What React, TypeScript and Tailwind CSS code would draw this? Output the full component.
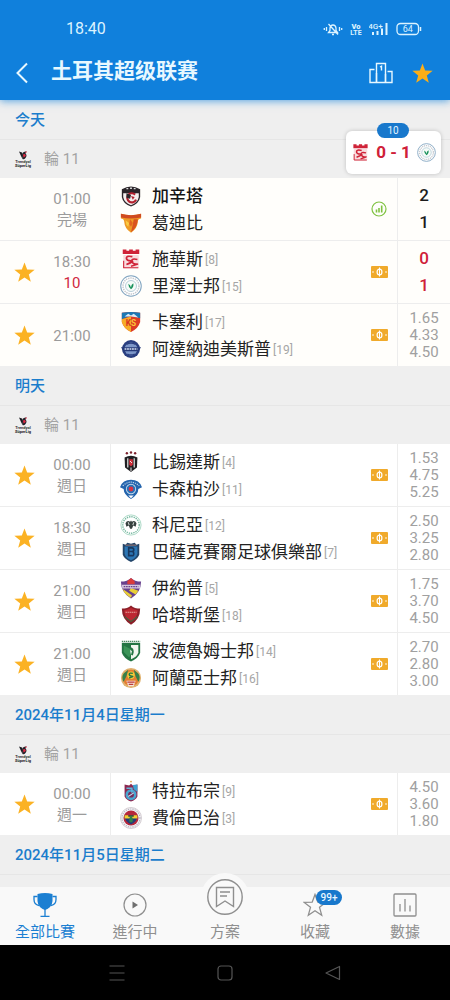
import React from "react";

type Mark = "stats" | "field";

interface Team {
  name: string;
  rank?: number;
  crest: string;
  bold?: boolean;
}

interface Match {
  time: string;
  note?: string;
  live?: boolean;
  starred: boolean;
  home: Team;
  away: Team;
  mark: Mark;
  score?: [string, string];
  odds?: [string, string, string];
}

interface Day {
  title: string;
  tint: string;
  matches: Match[];
}

const days: Day[] = [
  {
    title: "今天",
    tint: "bg-[#fffefb]",
    matches: [
      {
        time: "01:00",
        note: "完場",
        starred: false,
        home: { name: "加辛塔", crest: "gaziantep", bold: true },
        away: { name: "葛迪比", crest: "goztepe" },
        mark: "stats",
        score: ["2", "1"],
      },
      {
        time: "18:30",
        note: "10",
        live: true,
        starred: true,
        home: { name: "施華斯", rank: 8, crest: "sivas" },
        away: { name: "里澤士邦", rank: 15, crest: "rize" },
        mark: "field",
        score: ["0", "1"],
      },
      {
        time: "21:00",
        starred: true,
        home: { name: "卡塞利", rank: 17, crest: "kayseri" },
        away: { name: "阿達納迪美斯普", rank: 19, crest: "adana" },
        mark: "field",
        odds: ["1.65", "4.33", "4.50"],
      },
    ],
  },
  {
    title: "明天",
    tint: "bg-white",
    matches: [
      {
        time: "00:00",
        note: "週日",
        starred: true,
        home: { name: "比錫達斯", rank: 4, crest: "besiktas" },
        away: { name: "卡森柏沙", rank: 11, crest: "kasimpasa" },
        mark: "field",
        odds: ["1.53", "4.75", "5.25"],
      },
      {
        time: "18:30",
        note: "週日",
        starred: true,
        home: { name: "科尼亞", rank: 12, crest: "konya" },
        away: { name: "巴薩克賽爾足球俱樂部", rank: 7, crest: "basaksehir" },
        mark: "field",
        odds: ["2.50", "3.25", "2.80"],
      },
      {
        time: "21:00",
        note: "週日",
        starred: true,
        home: { name: "伊約普", rank: 5, crest: "eyup" },
        away: { name: "哈塔斯堡", rank: 18, crest: "hatay" },
        mark: "field",
        odds: ["1.75", "3.70", "4.50"],
      },
      {
        time: "21:00",
        note: "週日",
        starred: true,
        home: { name: "波德魯姆士邦", rank: 14, crest: "bodrum" },
        away: { name: "阿蘭亞士邦", rank: 16, crest: "alanya" },
        mark: "field",
        odds: ["2.70", "2.80", "3.00"],
      },
    ],
  },
  {
    title: "2024年11月4日星期一",
    tint: "bg-white",
    matches: [
      {
        time: "00:00",
        note: "週一",
        starred: true,
        home: { name: "特拉布宗", rank: 9, crest: "trabzon" },
        away: { name: "費倫巴治", rank: 3, crest: "fener" },
        mark: "field",
        odds: ["4.50", "3.60", "1.80"],
      },
    ],
  },
  { title: "2024年11月5日星期二", tint: "bg-white", matches: [] },
];

const crests: Record<string, React.ReactNode> = {
  gaziantep: (
    <>
      <path d="M2 4.500Q12-1 22 4.500V13Q21 20 12 23.500Q3 20 2 13Z" fill="#2b2529" />
      <path d="M3.500 9H20.500V13Q19.500 19 12 22Q4.500 19 3.500 13Z" fill="#f4efee" />
      <path d="M7 4h2M11 3.500h2M15 4h2" stroke="#ddd" strokeWidth="1.500" />
      <path d="M16.500 10.500A5 5 0 1 0 17.500 16" fill="none" stroke="#b3202e" strokeWidth="2.400" />
      <path d="M7 9l5 2-1 4-4-1Z" fill="#2b2529" />
      <path d="M12 12l4 1-2 3Z" fill="#b3202e" />
    </>
  ),
  goztepe: (
    <>
      <path d="M1 2Q12 5 23 2V7Q20 7 19.500 10Q19 18 12 22.500Q5 18 4.500 10Q4 7 1 7Z" fill="#ee9a25" />
      <path d="M1 2Q12 5 23 2V6Q12 8 1 6Z" fill="#cf4a21" />
      <path d="M15 8H19.500Q19 17 12 22Q14 14 15 8Z" fill="#d9531f" />
      <path d="M6 9l4 3-1 4-2-2Z" fill="#f9cb45" />
      <path d="M11 8l3 4-2 4-2-3Z" fill="#e2641f" />
    </>
  ),
  sivas: (
    <>
      <path d="M3 1.500h4v1.500h3V1.500h4v1.500h3V1.500h4v5H3Z" fill="#cf2338" />
      <rect x="3.500" y="7.500" width="17" height="14.500" rx="1" fill="#f8dcde" />
      <path d="M13.500 9.500Q7 8 7 11T12 14T7 18" fill="none" stroke="#cf2338" strokeWidth="1.900" />
      <path d="M19 12.500Q12 11 13 14.500T18 17.500T12 20" fill="none" stroke="#cf2338" strokeWidth="1.700" />
      <path d="M4 14v7.500h16" fill="none" stroke="#cf2338" strokeWidth="1.200" />
    </>
  ),
  rize: (
    <>
      <circle cx="12" cy="12" r="11.200" fill="#fff" stroke="#7fa3bf" strokeWidth="1.100" />
      <circle cx="12" cy="12" r="8.700" fill="none" stroke="#c2c6cc" strokeWidth="1.600" strokeDasharray="1.500 1" />
      <circle cx="12" cy="12" r="6" fill="#f6fbf8" stroke="#9dbccb" strokeWidth=".8" />
      <path d="M12 15.500Q9 13 9 9.500Q11.500 10.500 12 13.500Q12 10.500 14.500 9Q15.500 13 12 15.500Z" fill="#18915a" />
    </>
  ),
  kayseri: (
    <>
      <path d="M2 2Q12 0 22 2V12Q20 19 12 23Q4 19 2 12Z" fill="#dd3c26" />
      <path d="M2 2Q12 0 22 2V8L12 5L2 9Z" fill="#1c78b4" />
      <path d="M5 6l4-3 3 2 3-2 5 4-8-1Z" fill="#dcebf4" />
      <path d="M2 9L12 6V23Q4 19 2 12Z" fill="#f6ac27" />
      <text x="12" y="16" textAnchor="middle" fontSize="9" fontWeight="700" fill="#d63322">
        K<tspan fill="#fbc63a">S</tspan>
      </text>
    </>
  ),
  adana: (
    <>
      <circle cx="12" cy="12" r="9.800" fill="#293e7f" />
      <circle cx="12" cy="12" r="7" fill="#7d97c8" />
      <path d="M1 10h22l-3 4.500H4Z" fill="#263a78" />
      <path d="M5 12h14" stroke="#d8e2f2" strokeWidth="1.600" strokeDasharray="2 .7" />
      <path d="M7 7q5-3 10 0M8 17.500q4 2 8 0" fill="none" stroke="#293e7f" strokeWidth="1.300" />
    </>
  ),
  besiktas: (
    <>
      <circle cx="7.500" cy="2.500" r="1.300" fill="#7d222d" />
      <circle cx="12" cy="1.700" r="1.300" fill="#7d222d" />
      <circle cx="16.500" cy="2.500" r="1.300" fill="#7d222d" />
      <path d="M5 7Q12 3.500 19 7L18.500 18L12 23L5.500 18Z" fill="#201f22" />
      <path d="M8.500 8v10M15.500 8v10" stroke="#e6e6e6" strokeWidth="1.300" />
      <path d="M10 9h4v6l-2 2-2-2Z" fill="#cf2d39" />
      <path d="M11 11l2 2" stroke="#fff" strokeWidth="1" />
      <path d="M12 18v4" stroke="#ddd" strokeWidth="1.200" />
    </>
  ),
  kasimpasa: (
    <>
      <path d="M0 10Q3 2 12 2T24 10L20 12Q20 18 12 23Q4 18 4 12Z" fill="#2464ad" />
      <path d="M3 8.500Q12 .5 21 8.500" fill="none" stroke="#b9d0e8" strokeWidth="1.300" strokeDasharray="1.400 1" />
      <circle cx="12" cy="12" r="5.600" fill="#c4d8ea" />
      <circle cx="12" cy="12" r="4.600" fill="#2871b8" />
      <circle cx="12" cy="12" r="2.600" fill="#d93143" />
      <path d="M9 19l3 3 3-3" fill="#fff" />
    </>
  ),
  konya: (
    <>
      <circle cx="12" cy="12" r="11" fill="#fff" stroke="#a6d6c3" strokeWidth="1" />
      <circle cx="12" cy="12" r="9" fill="none" stroke="#74b79e" strokeWidth="1.500" strokeDasharray="1.500 1" />
      <path d="M6 10Q8 6 11 8.500L12 7L13 8.500Q16 6 18 10L17 14L14.500 12.500L13 16H11L9.500 12.500L7 14Z" fill="#37413f" />
      <path d="M9 9l1 3M15 9l-1 3" stroke="#e6eeea" strokeWidth="1" />
    </>
  ),
  basaksehir: (
    <>
      <path d="M3 3l3 1 2-2 4 1 4-1 2 2 3-1V15Q19 20 12 23Q5 20 3 15Z" fill="#234569" />
      <path d="M5 6H19V14Q18 18.500 12 21Q6 18.500 5 14Z" fill="#2c76b4" />
      <path d="M9.500 7.500h3.500q2 0 2 2t-2 2q2 0 2 2.500t-2 2h-3.500ZM9.500 11.500H13" fill="none" stroke="#17375e" strokeWidth="1.800" />
      <path d="M6 4.500h12" stroke="#c78b76" strokeWidth=".8" />
    </>
  ),
  eyup: (
    <>
      <path d="M1 5Q8 5 12 1Q16 5 23 5Q23 17 12 23.500Q1 17 1 5Z" fill="#68418d" />
      <path d="M8 4.500L12 1L16 4.500V8H8Z" fill="#da3d3a" />
      <path d="M3 13L13 20L12 22.500Q5 19 3 13ZM12 12L20 15L17 19L10 15Z" fill="#e9cf36" />
      <path d="M2 8.500h20v4H2.500Z" fill="#d6c8df" />
      <path d="M4 10.500h16" stroke="#68418d" strokeWidth="1.600" strokeDasharray="1.800 .8" />
    </>
  ),
  hatay: (
    <>
      <path d="M2 5Q8 5 12 1.500Q16 5 22 5Q22 17 12 22.500Q2 17 2 5Z" fill="#8c2029" />
      <path d="M4.500 7Q9 6 12 4Q15 6 19.500 7Q19 15 12 19Q5 15 4.500 7Z" fill="#bd2832" />
      <path d="M6 9h12" stroke="#e3a39b" strokeWidth="1.200" strokeDasharray="1.600 .6" />
      <path d="M5 14l7 5 7-5" fill="none" stroke="#4b6040" strokeWidth="1.400" />
    </>
  ),
  bodrum: (
    <>
      <path d="M2 3H22V14Q20 20 12 23.500Q4 20 2 14Z" fill="#247544" />
      <path d="M12 5.500h8v8.500q-2 5-8 7Z" fill="#f2f6f0" />
      <path d="M2 1.500h20" stroke="#4b8a62" strokeWidth="1.400" strokeDasharray="1.500 .7" />
      <path d="M4 6l8 4v5l-2 4-6-6Z" fill="#3b9458" />
      <path d="M12 8q3 1 3 5l-1 4-2-1Z" fill="#247544" />
      <path d="M11 11l2 1-1 4Z" fill="#fff" />
    </>
  ),
  alanya: (
    <>
      <circle cx="12" cy="12" r="11" fill="#e0b06c" />
      <circle cx="12" cy="12" r="9" fill="#e47d31" />
      <path d="M4 7l5-4-2 7-3 6Q1 11 4 7ZM20 7l-5-4 2 7 3 6Q23 11 20 7Z" fill="#378049" />
      <circle cx="12" cy="9" r="4" fill="#f1ce39" />
      <path d="M14 7q-4-1-4 1t3 2-3 2" fill="none" stroke="#287344" strokeWidth="1.500" />
      <path d="M7 15h10l-2 6H9Z" fill="#f4e6dc" />
      <path d="M8 16.500h8M9.500 19h5" stroke="#bd3937" strokeWidth="1.300" />
    </>
  ),
  trabzon: (
    <>
      <circle cx="12" cy="1.700" r="1" fill="#e2a24d" />
      <path d="M5 5l5 1 2-2 2 2 5-1V18Q17 22 12 23.500Q7 22 5 18Z" fill="#8c2850" />
      <path d="M14 5.500l5-.5v8l-4-3Z" fill="#3fa2d2" />
      <circle cx="12" cy="16" r="6" fill="#48a5cf" />
      <circle cx="12" cy="16" r="3.200" fill="#772b59" />
      <path d="M7 9h6v5" fill="none" stroke="#61b6dc" strokeWidth="1.500" />
      <path d="M9 18l6-4" stroke="#b8deee" strokeWidth="1.200" />
    </>
  ),
  fener: (
    <>
      <circle cx="12" cy="12" r="11.500" fill="#f1f0f3" stroke="#c9c0c6" strokeWidth=".8" />
      <circle cx="12" cy="12" r="9.800" fill="none" stroke="#b3aebb" strokeWidth="1.200" strokeDasharray="1.200 1.300" />
      <circle cx="12" cy="12" r="8.200" fill="#b5273b" />
      <path d="M5 9.500h14q0 6-7 9.500-7-3.500-7-9.500Z" fill="#233d78" />
      <path d="M5 9h14v3.500H5Z" fill="#f2d02e" />
      <path d="M9 9h6v1.500H9Z" fill="#1d2440" />
      <path d="M12 9q3 4 1.500 7.500h-3Q9 13 12 9Z" fill="#2d8347" />
    </>
  ),
};

function Crest({ id, small }: { id: string; small?: boolean }) {
  return (
    <svg
      viewBox="0 0 24 24"
      aria-hidden="true"
      className={small ? "size-[19px] shrink-0" : "size-[22px] shrink-0"}
    >
      {crests[id]}
    </svg>
  );
}

function Star() {
  return (
    <svg viewBox="0 0 24 24" className="size-[23px]" fill="currentColor" aria-hidden="true">
      <path d="M12 1.500L14.800 8.900L22.600 9.200L16.500 14L18.600 21.600L12 17.300L5.400 21.600L7.500 14L1.400 9.200L9.200 8.900Z" />
    </svg>
  );
}

function LeagueLogo() {
  return (
    <svg viewBox="0 0 18 18" className="size-[18px] shrink-0" aria-hidden="true">
      <path d="M5 1.500L8 2.500L9 5L8.500 9L7 6Z" fill="#1d1c22" />
      <path d="M8.500 3Q10 1 12.500 1.500L11.500 3.200Q13.500 5.500 11.500 8Q10 9.800 8.500 9Z" fill="#23232a" />
      <path d="M9 4.500Q10.500 3.200 11.500 4.800T9.500 7.500Z" fill="#e22c45" />
      <path d="M11 2l2-.8-1 2Z" fill="#e22c45" />
      <text x="9" y="13.200" textAnchor="middle" fontSize="4" fontWeight="700" fill="#333">Trendyol</text>
      <text x="9" y="17" textAnchor="middle" fontSize="4" fontWeight="700" fill="#222">SüperLig</text>
    </svg>
  );
}

function StatsMark() {
  return (
    <svg viewBox="0 0 16 16" className="size-4" aria-hidden="true">
      <circle cx="8" cy="8" r="7" fill="none" stroke="#7fc241" strokeWidth="1.200" />
      <path d="M5.500 11.500V8.500M8 11.500V7M10.700 11.500V4.500" stroke="#7fc241" strokeWidth="1.600" />
    </svg>
  );
}

function FieldMark() {
  return (
    <svg viewBox="0 0 17 12" className="h-3 w-[17px]" aria-hidden="true">
      <rect width="17" height="12" rx="1" fill="#f0aa2b" />
      <ellipse cx="8.500" cy="6" rx="2.400" ry="2.900" fill="none" stroke="#fff" strokeWidth="1.200" />
      <path d="M8.500 1.500v9" stroke="#fff" strokeWidth="1" />
      <path d="M1.500 5l1 1-1 1M15.500 5l-1 1 1 1" fill="none" stroke="#fff" strokeWidth=".9" />
    </svg>
  );
}

function TeamLine({ team }: { team: Team }) {
  return (
    <div className="flex h-[27px] items-center gap-[10px] whitespace-nowrap">
      <Crest id={team.crest} />
      <div className="flex items-center gap-[2px] pt-[2px]">
        <span className={team.bold ? "text-[17px] font-medium text-[#151515]" : "text-[17px] text-[#222]"}>
          {team.name}
        </span>
        {team.rank !== undefined && <span className="text-[12px] text-[#a6a6a6]">[{team.rank}]</span>}
      </div>
    </div>
  );
}

function MatchRow({ match, tint }: { match: Match; tint: string }) {
  return (
    <li
      className={`flex min-h-[63px] items-stretch border-b border-[#ededed] last:min-h-[62px] last:border-b-0 ${tint}`}
    >
      <div className="flex w-[111px] shrink-0 border-r border-[#ededed]">
        <div className="flex w-12 items-center justify-center">
          {match.starred && (
            <button type="button" aria-label="收藏" className="text-[#fbb224]">
              <Star />
            </button>
          )}
        </div>
        <div className="flex w-12 flex-col items-center justify-center pt-[2px] text-[15px] leading-[21px] text-[#9b9b9b]">
          <time>{match.time}</time>
          {match.note && <span className={match.live ? "text-[#d0283f]" : ""}>{match.note}</span>}
        </div>
      </div>
      <div className="flex min-w-0 flex-1 flex-col justify-center pl-[9px]">
        <TeamLine team={match.home} />
        <TeamLine team={match.away} />
      </div>
      <div className="flex w-9 shrink-0 items-center justify-center">
        {match.mark === "stats" ? <StatsMark /> : <FieldMark />}
      </div>
      <div className="flex w-[53px] shrink-0 flex-col items-center justify-center border-l border-[#ededed]">
        {match.score?.map((goal, i) => (
          <span
            key={i}
            className={
              match.live
                ? "text-[17px] leading-[27px] font-medium text-[#cf2038]"
                : "text-[17px] leading-[27px] font-medium text-[#1c1c1c]"
            }
          >
            {goal}
          </span>
        ))}
        {match.odds?.map((odd, i) => (
          <span key={i} className="text-[15px] leading-[17px] text-[#a0a0a0]">
            {odd}
          </span>
        ))}
      </div>
    </li>
  );
}

function StatusBar() {
  return (
    <div className="flex h-[58px] items-center justify-between pr-[28px] pl-[66px]">
      <span className="text-[16px] text-[#dcf3ff]">18:40</span>
      <div className="flex items-center gap-[7px] text-[#dcf3ff]">
        <svg viewBox="0 0 20 14" className="h-[14px] w-5" fill="none" stroke="currentColor" strokeWidth="1.300" aria-hidden="true">
          <path d="M5.500 10.500h9L13 8.500V6Q12.500 3 10 3T7 6v2.500ZM9 12.500h2M5.500 2l9.500 10.500" />
          <path d="M3.500 5v4M16.500 5v4M1.300 6v2M18.700 6v2" />
        </svg>
        <svg viewBox="0 0 12 14" className="h-[14px] w-3" fill="currentColor" aria-hidden="true">
          <text x="6" y="6.500" textAnchor="middle" fontSize="7.500" fontWeight="900">Vo</text>
          <text x="6" y="13.300" textAnchor="middle" fontSize="7" fontWeight="700">LTE</text>
        </svg>
        <svg viewBox="0 0 20 14" className="h-[14px] w-5" fill="currentColor" aria-hidden="true">
          <text x="6.500" y="6.500" textAnchor="middle" fontSize="8" fontWeight="500">4G+</text>
          <path d="M3 10h2v3H3ZM7.500 9h2v4h-2ZM12 6.500h2v6.500h-2ZM16.500 1h2v12h-2Z" />
        </svg>
        <svg viewBox="0 0 26 14" className="h-[14px] w-[26px]" aria-hidden="true">
          <rect x="1" y="1.500" width="21.500" height="11" rx="3.500" fill="none" stroke="currentColor" strokeWidth="1.300" />
          <path d="M24.500 5v4" stroke="currentColor" strokeWidth="1.500" />
          <text x="11.700" y="10.300" textAnchor="middle" fontSize="9" fill="currentColor">64</text>
        </svg>
      </div>
    </div>
  );
}

function NavLabel({ children }: { children: React.ReactNode }) {
  return <span className="text-[15px] leading-[20px]">{children}</span>;
}

const navItem = "flex flex-1 flex-col items-center gap-[5px] pt-[6px] pb-[3px]";
const navIcon = "size-6";

export default function App() {
  return (
    <div className="flex min-h-screen flex-col bg-[#efefef] font-['Roboto','Noto_Sans_CJK_TC',sans-serif]">
      <header className="relative z-10 bg-[#1080dc] pb-3 shadow-[0_1px_8px_rgba(16,128,220,0.7)]">
        <StatusBar />
        <div className="flex h-[30px] items-center pr-4 pl-[10px] text-[#e8f8ff]">
          <button type="button" aria-label="返回" className="flex w-6 justify-center">
            <svg viewBox="0 0 12 22" className="h-[22px] w-3" fill="none" stroke="currentColor" strokeWidth="2" aria-hidden="true">
              <path d="M11 1.500L1.500 11L11 20.500" />
            </svg>
          </button>
          <h1
            lang="zh-Hans"
            className="ml-[17px] flex-1 pb-1 font-['Roboto','Noto_Sans_CJK_SC',sans-serif] text-[21px] leading-[26px] font-bold"
          >
            土耳其超级联赛
          </h1>
          <button type="button" aria-label="積分榜">
            <svg viewBox="0 0 24 22" className="h-[22px] w-6" fill="none" stroke="currentColor" strokeWidth="1.400" aria-hidden="true">
              <path d="M7.500 20.500V1.500h9v19M5.500 7.500H1v13h22v-11h-4.500" />
              <path d="M11 5l1.500-.8v4.300" />
              <path d="M7.500 11v9M16.500 12v8" />
            </svg>
          </button>
          <button type="button" aria-label="收藏聯賽" className="ml-[18px] text-[#fbae17]">
            <Star />
          </button>
        </div>
      </header>

      <main className="relative flex-1">
        {days.map((day) => (
          <section key={day.title}>
            <h2 className="flex h-10 items-center border-b border-[#e6e6e6] px-[15px] pt-[2px] text-[15px] font-medium text-[#1b7dcc]">
              {day.title}
            </h2>
            {day.matches.length > 0 && (
              <>
                <div className="flex h-[38px] items-center gap-3 px-[14px] text-[15px] text-[#a3a3a3]">
                  <LeagueLogo />
                  <span>輪 11</span>
                </div>
                <ul>
                  {day.matches.map((match) => (
                    <MatchRow key={match.home.name} match={match} tint={day.tint} />
                  ))}
                </ul>
              </>
            )}
          </section>
        ))}

        <aside className="absolute top-[31px] right-[9px] flex h-[43px] w-[95px] items-center justify-between rounded-[6px] bg-white px-[5px] shadow-[0_0_4px_rgba(0,0,0,0.2)]">
          <span className="absolute -top-2 left-[31px] flex h-[15px] w-8 items-center justify-center rounded-full bg-[#1878cc] text-[10px] text-[#e3f4ff]">
            10
          </span>
          <Crest id="sivas" small />
          <span className="text-[17px] font-bold whitespace-nowrap text-[#cf2038]">0 - 1</span>
          <Crest id="rize" small />
        </aside>
      </main>

      <footer className="sticky bottom-0 z-10">
        <nav className="flex bg-[#f9f9f9] text-[#8f8f8f]">
          <button type="button" className={`${navItem} text-[#1b7fd2]`}>
            <svg viewBox="0 0 24 24" className={navIcon} aria-hidden="true">
              <path d="M4.500 1Q12-1 19.500 1V8Q19 14.500 12 17Q5 14.500 4.500 8Z" fill="currentColor" />
              <path d="M4.500 3.500H1v3q0 5 5 6M19.500 3.500H23v3q0 5-5 6M12 16v7M7.500 23.300h9" fill="none" stroke="currentColor" strokeWidth="1.300" />
            </svg>
            <NavLabel>全部比賽</NavLabel>
          </button>
          <button type="button" className={navItem}>
            <svg viewBox="0 0 24 24" className={navIcon} aria-hidden="true">
              <circle cx="12" cy="12" r="11" fill="none" stroke="currentColor" strokeWidth="1.200" />
              <path d="M9.500 8.500L15 12L9.500 15.500Z" fill="#6f6f6f" />
            </svg>
            <NavLabel>進行中</NavLabel>
          </button>
          <button type="button" className="-mt-[14px] flex flex-1 flex-col items-center gap-px pb-[3px]">
            <span className="flex size-12 items-center justify-center rounded-full bg-[#f9f9f9]">
              <svg viewBox="0 0 36 36" className="size-9" fill="none" stroke="currentColor" strokeWidth="1.400" aria-hidden="true">
                <circle cx="18" cy="18" r="17.200" />
                <path d="M9.500 8.500h17v19L18 22L9.500 27.500ZM13 13h10M13 17h7" />
              </svg>
            </span>
            <NavLabel>方案</NavLabel>
          </button>
          <button type="button" className={navItem}>
            <span className="relative">
              <svg viewBox="0 0 24 24" className={navIcon} fill="none" stroke="currentColor" strokeWidth="1.300" aria-hidden="true">
                <path d="M12 1.500L14.800 9.200L22.800 9.400L16.500 14.300L18.700 22.200L12 17.700L5.300 22.200L7.500 14.300L1.200 9.400L9.200 9.200Z" />
              </svg>
              <span className="absolute -top-[3px] left-[13px] flex h-[15px] w-[26px] items-center justify-center rounded-full bg-[#1878cc] text-[10px] font-medium text-[#e8f6ff]">
                99+
              </span>
            </span>
            <NavLabel>收藏</NavLabel>
          </button>
          <button type="button" className={navItem}>
            <svg viewBox="0 0 24 24" className={navIcon} fill="none" stroke="currentColor" strokeWidth="1.300" aria-hidden="true">
              <rect x="1" y="1" width="22" height="22" rx="1" />
              <path d="M7 11v7.500M12 6v12.500M17 12.500v6" />
            </svg>
            <NavLabel>數據</NavLabel>
          </button>
        </nav>
        <div className="flex h-[55px] items-center justify-center gap-[84px] bg-black text-[#555]">
          <button type="button" aria-label="選單">
            <svg viewBox="0 0 24 24" className="size-6" fill="none" stroke="currentColor" strokeWidth="1.200" aria-hidden="true">
              <path d="M4.500 5h15M4.500 12h15M4.500 19h15" />
            </svg>
          </button>
          <button type="button" aria-label="主畫面">
            <svg viewBox="0 0 24 24" className="size-6" fill="none" stroke="currentColor" strokeWidth="1.200" aria-hidden="true">
              <rect x="5" y="5" width="14" height="14" rx="3" />
            </svg>
          </button>
          <button type="button" aria-label="上一頁">
            <svg viewBox="0 0 24 24" className="size-6" fill="none" stroke="currentColor" strokeWidth="1.200" strokeLinejoin="round" aria-hidden="true">
              <path d="M18.500 5.500v13L5 12Z" />
            </svg>
          </button>
        </div>
      </footer>
    </div>
  );
}
